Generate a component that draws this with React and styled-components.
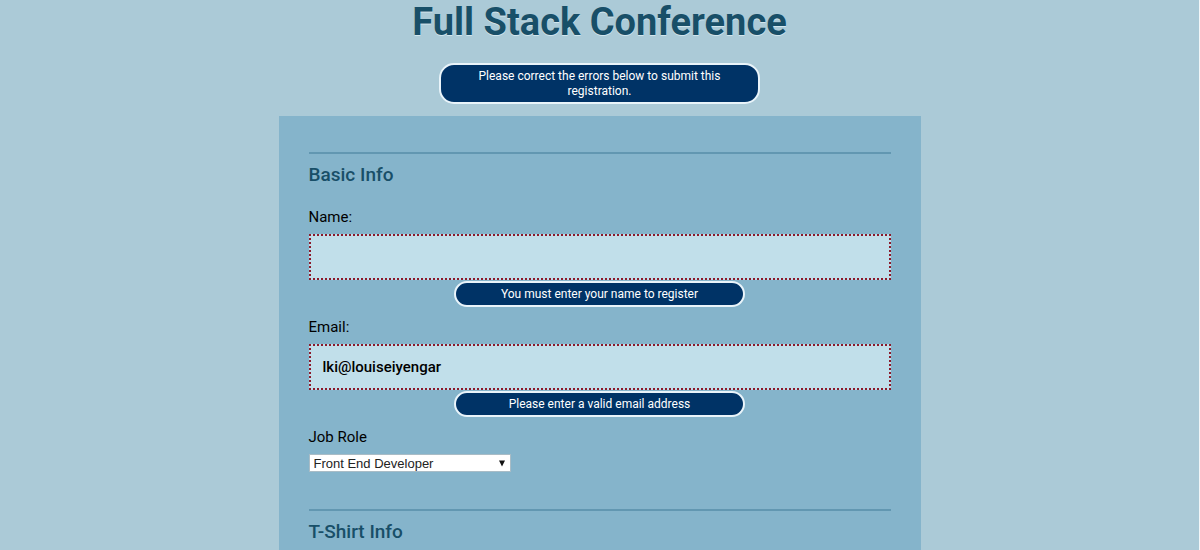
import React from 'react';
import styled, { createGlobalStyle } from 'styled-components';

const GlobalStyle = createGlobalStyle`
  *, *::before, *::after { box-sizing: border-box; }
  body {
    margin: 0;
    background: #abcad7;
    color: #000;
    font-family: Roboto, "Liberation Sans", sans-serif;
    font-size: 15px;
  }
`;

const Page = styled.div`
  min-height: 100vh;
  display: flex;
  flex-direction: column;
  align-items: center;
  border-right: 1px solid #f2f7f9;
`;

const Content = styled.main`
  width: 100%;
  max-width: 642px;
  flex: 1;
  display: flex;
  flex-direction: column;
`;

const Title = styled.h1`
  margin: 0 0 19px;
  color: #184f68;
  font-size: 38px;
  font-weight: 700;
  line-height: 44px;
  text-align: center;
  text-shadow: 0 1px 0 #d2e6ee;
`;

const ErrorMessage = styled.p`
  width: 50%;
  margin: 0 auto;
  padding: ${({ $summary }) => ($summary ? '4px 20px 3px' : '4px 4px 3px')};
  border: 2px solid #e9f4fa;
  border-radius: 15px;
  background: #003366;
  color: #fff;
  font-size: 12px;
  line-height: 15px;
  text-align: center;
`;

const Form = styled.form`
  flex: 1;
  margin-top: 12px;
  padding: 36px 30px 0;
  background: #85b4cb;
`;

const Section = styled.section`
  border-top: 2px solid #6297b1;
  padding-top: 8px;
  & + & { margin-top: 37px; }
`;

const SectionTitle = styled.h2`
  margin: 0 0 19px;
  color: #184f68;
  font-size: 19px;
  font-weight: 500;
  line-height: 26px;
  &:last-child { margin-bottom: 0; }
`;

const Field = styled.div`
  display: flex;
  flex-direction: column;
  align-items: flex-start;
  & + & { margin-top: 10px; }
`;

const Label = styled.label`
  margin-bottom: 7px;
  line-height: 20px;
`;

const TextInput = styled.input`
  width: 100%;
  height: 46px;
  margin-bottom: 1px;
  padding: 0 12px;
  border: 2px dotted #8b1a2b;
  border-radius: 0;
  outline: none;
  background: #c1dfea;
  color: #000;
  font: 500 15px Roboto, "Liberation Sans", sans-serif;
`;

const SelectWrap = styled.div`
  display: grid;
  width: 202px;
`;

const Select = styled.select`
  grid-area: 1 / 1;
  appearance: none;
  height: 18px;
  padding: 0 4px;
  border: 1px solid #a9bcc6;
  border-radius: 0;
  background: #fff;
  color: #222;
  font: 13px "Liberation Sans", Arial, sans-serif;
`;

const Arrow = styled.svg`
  grid-area: 1 / 1;
  place-self: center end;
  margin-right: 5px;
  pointer-events: none;
`;

function TextField({ id, label, type, value, error }) {
  return (
    <Field>
      <Label htmlFor={id}>{label}</Label>
      <TextInput id={id} type={type} defaultValue={value} aria-invalid="true" aria-describedby={`${id}-error`} />
      <ErrorMessage id={`${id}-error`}>{error}</ErrorMessage>
    </Field>
  );
}

export default function App() {
  return (
    <>
      <GlobalStyle />
      <Page>
        <Content>
          <Title>Full Stack Conference</Title>
          <ErrorMessage $summary role="alert">
            Please correct the errors below to submit this registration.
          </ErrorMessage>
          <Form noValidate>
            <Section>
              <SectionTitle>Basic Info</SectionTitle>
              <TextField id="name" label="Name:" type="text" value="" error="You must enter your name to register" />
              <TextField
                id="email"
                label="Email:"
                type="email"
                value="lki@louiseiyengar"
                error="Please enter a valid email address"
              />
              <Field>
                <Label htmlFor="role">Job Role</Label>
                <SelectWrap>
                  <Select id="role" defaultValue="front-end">
                    <option value="front-end">Front End Developer</option>
                  </Select>
                  <Arrow width="8" height="7" viewBox="0 0 8 7" aria-hidden="true">
                    <path d="M1 0.5H7L4 6.5Z" fill="#111" />
                  </Arrow>
                </SelectWrap>
              </Field>
            </Section>
            <Section>
              <SectionTitle>T-Shirt Info</SectionTitle>
            </Section>
          </Form>
        </Content>
      </Page>
    </>
  );
}
